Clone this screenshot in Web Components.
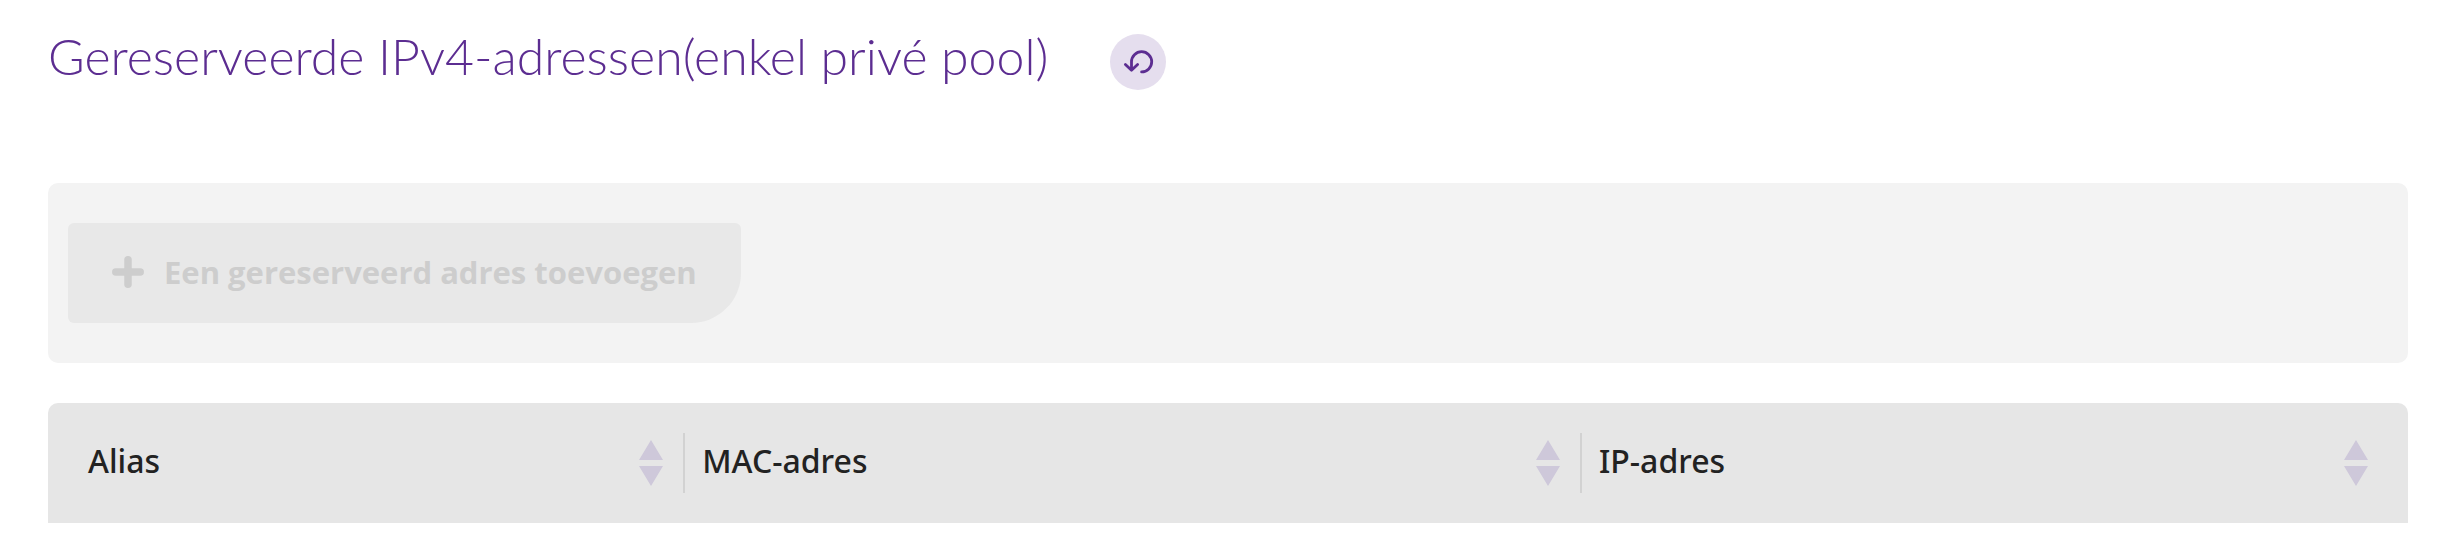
<!DOCTYPE html>
<html lang="nl">
<head>
<meta charset="utf-8">
<meta name="viewport" content="width=device-width, initial-scale=1">
<title>Gereserveerde IPv4-adressen</title>
<style>
  body {
    margin: 0;
    background: #fff;
    color: #222;
    font-family: "Noto Sans", "Open Sans", sans-serif;
    --purple: #5c2d91;
    --purple-light: #e5deee;
    --sort: #cec8da;
  }
</style>
</head>
<body>

<reserved-addresses>
  <section-header slot="header" heading="Gereserveerde IPv4-adressen(enkel privé pool)"></section-header>
  <action-bar>
    <add-button>Een gereserveerd adres toevoegen</add-button>
  </action-bar>
  <address-table columns="Alias,MAC-adres,IP-adres"></address-table>
</reserved-addresses>

<script>
class ReservedAddresses extends HTMLElement {
  constructor() {
    super();
    this.attachShadow({ mode: 'open' });
    this.shadowRoot.innerHTML = `
      <style>
        :host {
          display: block;
          padding: 26px 56px 24px 48px;
        }

        .content {
          display: flex;
          flex-direction: column;
          gap: 40px;
          margin-top: 85px;
        }
      </style>
      <slot name="header"></slot>
      <div class="content"><slot></slot></div>
    `;
  }
}

class SectionHeader extends HTMLElement {
  constructor() {
    super();
    this.attachShadow({ mode: 'open' });
  }

  connectedCallback() {
    this.shadowRoot.innerHTML = `
      <style>
        :host {
          display: flex;
          align-items: center;
          gap: 62px;
        }

        h1 {
          margin: 0;
          padding-bottom: 12px;
          color: var(--purple);
          font-family: Lato, sans-serif;
          font-size: 50px;
          font-weight: 300;
          line-height: 60px;
        }
      </style>
      <h1>${this.getAttribute('heading')}</h1>
      <refresh-button></refresh-button>
    `;
  }
}

class RefreshButton extends HTMLElement {
  constructor() {
    super();
    this.attachShadow({ mode: 'open' });
    this.shadowRoot.innerHTML = `
      <style>
        :host {
          display: block;
          flex: none;
        }

        button {
          display: block;
          width: 56px;
          height: 56px;
          padding: 0;
          border: 0;
          border-radius: 50%;
          background: var(--purple-light);
          color: var(--purple);
          cursor: pointer;
        }

        svg {
          display: block;
        }
      </style>
      <button type="button" aria-label="Vernieuwen">
        <svg width="56" height="56" viewBox="0 0 56 56" fill="none" stroke="currentColor" stroke-width="2.8" stroke-linecap="round" stroke-linejoin="round">
          <path d="M15.4 30.4l6.1 5.8 6.1-5.8M21.5 36V27.8a10.1 10.1 0 1 1 10.1 10.1"/>
        </svg>
      </button>
    `;
  }
}

class ActionBar extends HTMLElement {
  constructor() {
    super();
    this.attachShadow({ mode: 'open' });
    this.shadowRoot.innerHTML = `
      <style>
        :host {
          display: flex;
          padding: 40px 20px;
          border-radius: 10px;
          background: #f3f3f3;
        }
      </style>
      <slot></slot>
    `;
  }
}

class AddButton extends HTMLElement {
  constructor() {
    super();
    this.attachShadow({ mode: 'open' });
    this.shadowRoot.innerHTML = `
      <style>
        :host {
          display: block;
        }

        button {
          display: flex;
          align-items: center;
          gap: 20px;
          padding: 27px 44px 29px;
          border: 0;
          border-radius: 6px 6px 50px 6px;
          background: #e8e8e8;
          color: #cdcdcd;
          font-family: "Open Sans", sans-serif;
          font-size: 31px;
          font-weight: 700;
          line-height: 44px;
        }
      </style>
      <button type="button" disabled>
        <svg width="32" height="32" viewBox="0 0 32 32" stroke="currentColor" stroke-width="7.5" stroke-linecap="round">
          <path d="M16 3.8v24.4M3.8 16h24.4"/>
        </svg>
        <slot></slot>
      </button>
    `;
  }
}

class SortButton extends HTMLElement {
  constructor() {
    super();
    this.attachShadow({ mode: 'open' });
  }

  connectedCallback() {
    this.shadowRoot.innerHTML = `
      <style>
        :host {
          display: block;
          flex: none;
        }

        button {
          display: block;
          padding: 0;
          border: 0;
          background: none;
          color: var(--sort);
          cursor: pointer;
        }

        svg {
          display: block;
        }
      </style>
      <button type="button" aria-label="Sorteren op ${this.getAttribute('column')}">
        <svg width="24" height="46" viewBox="0 0 24 46" fill="currentColor">
          <path d="M12 0l12 20H0zM0 26h24L12 46z"/>
        </svg>
      </button>
    `;
  }
}

class AddressTable extends HTMLElement {
  constructor() {
    super();
    this.attachShadow({ mode: 'open' });
  }

  connectedCallback() {
    const columns = this.getAttribute('columns').split(',');
    const cells = columns.map(name => `
      <th scope="col">
        <div class="cell">
          <span>${name}</span>
          <sort-button column="${name}"></sort-button>
        </div>
      </th>
    `).join('');

    this.shadowRoot.innerHTML = `
      <style>
        :host {
          display: block;
        }

        table {
          width: 100%;
          table-layout: fixed;
          border-spacing: 0;
          border-radius: 10px 10px 0 0;
          background: #e6e6e6;
        }

        th {
          width: 38%;
          padding: 30px 0;
          font-size: 32px;
          font-weight: 500;
          line-height: 44px;
          text-align: left;
        }

        th:first-child {
          width: 27%;
        }

        th:last-child {
          width: 35%;
        }

        .cell {
          display: flex;
          align-items: center;
          justify-content: space-between;
          box-sizing: border-box;
          height: 60px;
          padding: 0 20px 0 17px;
          border-right: 2px solid #d2d2d2;
        }

        .cell span {
          padding-bottom: 4px;
        }

        th:first-child .cell {
          padding-left: 40px;
        }

        th:last-child .cell {
          padding-right: 40px;
          border-right: 0;
        }
      </style>
      <table>
        <thead>
          <tr>${cells}</tr>
        </thead>
      </table>
    `;
  }
}

customElements.define('refresh-button', RefreshButton);
customElements.define('sort-button', SortButton);
customElements.define('section-header', SectionHeader);
customElements.define('action-bar', ActionBar);
customElements.define('add-button', AddButton);
customElements.define('address-table', AddressTable);
customElements.define('reserved-addresses', ReservedAddresses);
</script>
</body>
</html>
